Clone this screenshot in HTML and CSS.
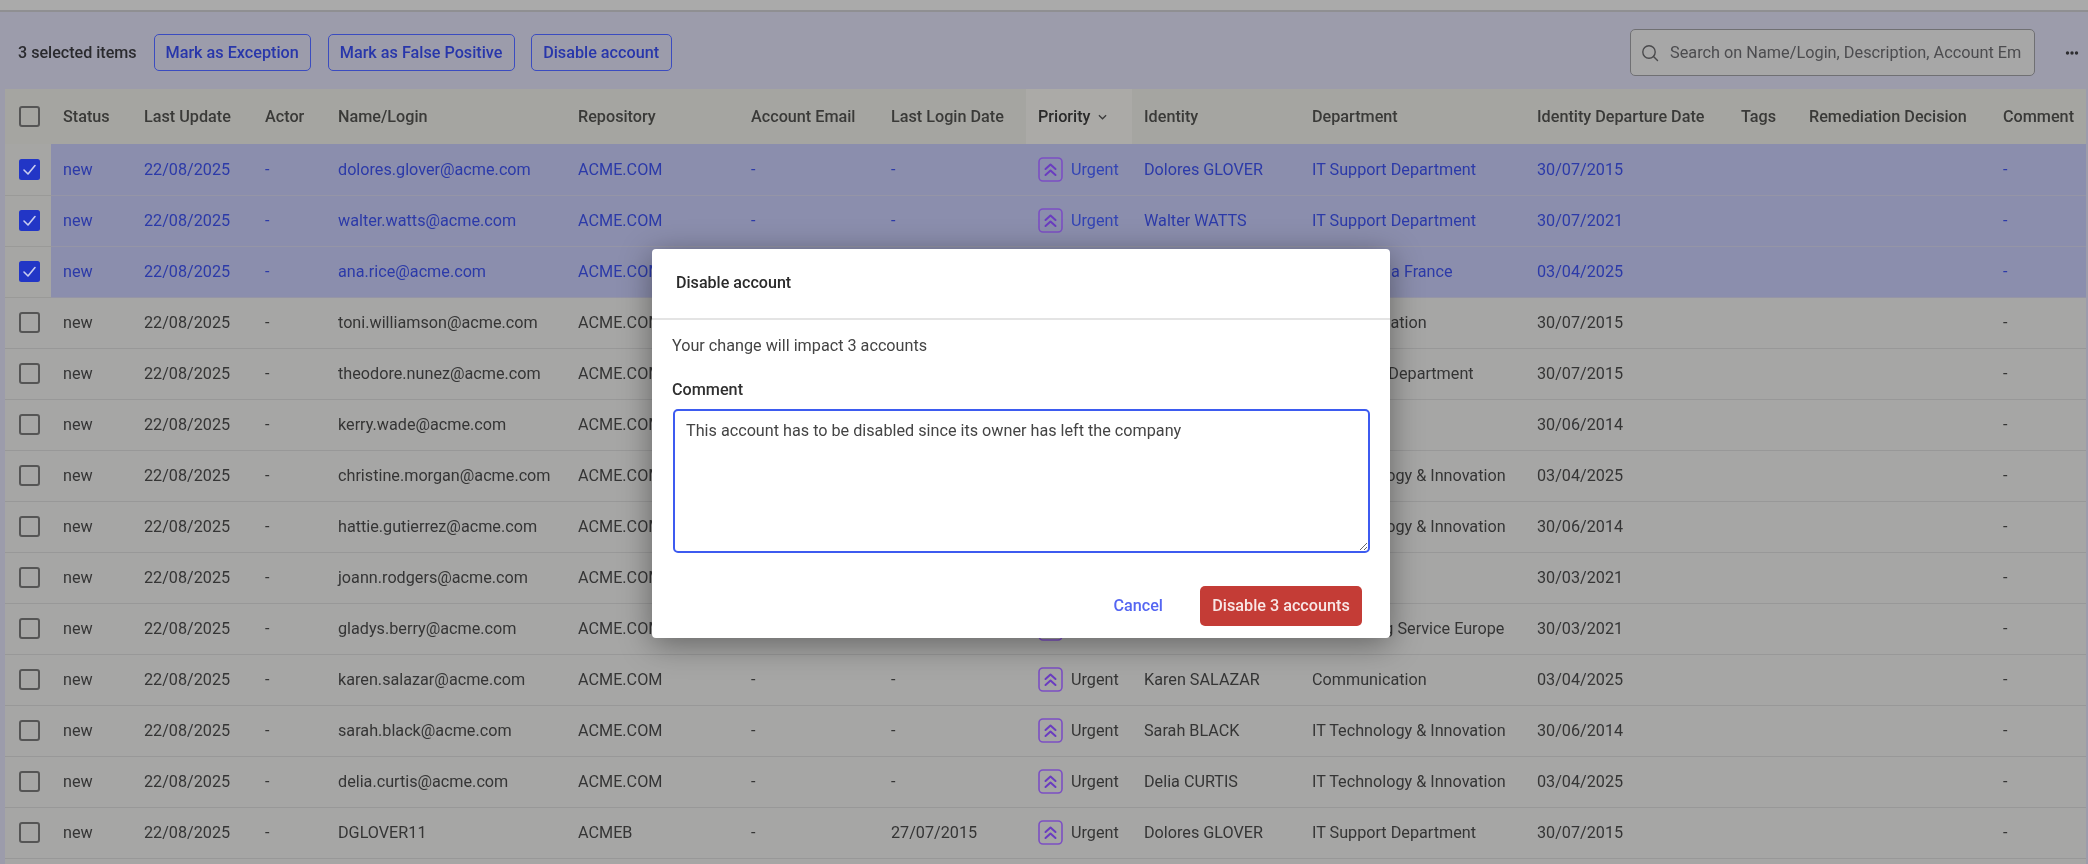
FILE: index.html
```html
<!DOCTYPE html>
<html lang="en">
<head>
<meta charset="utf-8">
<title>Disable account</title>
<link rel="stylesheet" href="styles.css">
</head>
<body>
<svg class="defs" aria-hidden="true"><defs>
<symbol id="urgent" viewBox="0 0 25 25"><rect x="1" y="1" width="23" height="23" rx="4" fill="none" stroke="#7c4fc4" stroke-width="1.6"/><path d="M7.5 12 12.5 7.5 17.5 12M7.5 18 12.5 13.5 17.5 18" fill="none" stroke="#6a3cc0" stroke-width="2" stroke-linecap="round" stroke-linejoin="round"/></symbol>
<symbol id="tick" viewBox="0 0 21 21"><rect width="21" height="21" rx="2.5" fill="#2236c6"/><path d="M5 11 9 15 16 6.5" fill="none" stroke="#c9cdf0" stroke-width="1.6" stroke-linecap="round" stroke-linejoin="round"/></symbol>
</defs></svg>
<div class="page">
  <div class="topbar"></div>
  <div class="toolbar">
    <span class="count">3 selected items</span>
    <button class="action a1">Mark as Exception</button>
    <button class="action a2">Mark as False Positive</button>
    <button class="action a3">Disable account</button>
    <div class="search">
      <svg class="search-icon" viewBox="0 0 20 20"><circle cx="9" cy="9" r="6.2" fill="none" stroke="#4a4a4c" stroke-width="1.4"/><path d="M13.5 13.5 17.5 17.5" stroke="#4a4a4c" stroke-width="1.4" stroke-linecap="round"/></svg>
      <span class="search-text">Search on Name/Login, Description, Account Em</span>
    </div>
    <svg class="more" viewBox="0 0 14 4"><circle cx="2.5" cy="2" r="1.7" fill="#2d2d30"/><circle cx="7" cy="2" r="1.7" fill="#2d2d30"/><circle cx="11.5" cy="2" r="1.7" fill="#2d2d30"/></svg>
  </div>
  <table class="grid">
    <colgroup><col class="c0"><col class="c1"><col class="c2"><col class="c3"><col class="c4"><col class="c5"><col class="c6"><col class="c7"><col class="c8"><col class="c9"><col class="c10"><col class="c11"><col class="c12"><col class="c13"><col class="c14"></colgroup>
    <thead><tr>
      <th class="check"><span class="box"></span></th><th>Status</th><th>Last Update</th><th>Actor</th><th>Name/Login</th><th>Repository</th><th>Account Email</th><th>Last Login Date</th>
      <th class="sorted">Priority <svg class="chev" viewBox="0 0 10 6"><path d="M1 1 5 5 9 1" fill="none" stroke="#3a3a3a" stroke-width="1.4"/></svg></th>
      <th>Identity</th><th>Department</th><th>Identity Departure Date</th><th>Tags</th><th>Remediation Decision</th><th>Comment</th>
    </tr></thead>
    <tbody>
      <tr class="sel"><td class="check"><svg class="tick"><use href="#tick"/></svg></td><td>new</td><td>22/08/2025</td><td>-</td><td>dolores.glover@acme.com</td><td>ACME.COM</td><td>-</td><td>-</td><td><span class="prio"><svg class="urgent"><use href="#urgent"/></svg>Urgent</span></td><td>Dolores GLOVER</td><td>IT Support Department</td><td>30/07/2015</td><td></td><td></td><td>-</td></tr>
      <tr class="sel"><td class="check"><svg class="tick"><use href="#tick"/></svg></td><td>new</td><td>22/08/2025</td><td>-</td><td>walter.watts@acme.com</td><td>ACME.COM</td><td>-</td><td>-</td><td><span class="prio"><svg class="urgent"><use href="#urgent"/></svg>Urgent</span></td><td>Walter WATTS</td><td>IT Support Department</td><td>30/07/2021</td><td></td><td></td><td>-</td></tr>
      <tr class="sel"><td class="check"><svg class="tick"><use href="#tick"/></svg></td><td>new</td><td>22/08/2025</td><td>-</td><td>ana.rice@acme.com</td><td>ACME.COM</td><td>-</td><td>-</td><td><span class="prio"><svg class="urgent"><use href="#urgent"/></svg>Urgent</span></td><td>Ana RICE</td><td>Sales Media France</td><td>03/04/2025</td><td></td><td></td><td>-</td></tr>
      <tr><td class="check"><span class="box"></span></td><td>new</td><td>22/08/2025</td><td>-</td><td>toni.williamson@acme.com</td><td>ACME.COM</td><td>-</td><td>-</td><td><span class="prio"><svg class="urgent"><use href="#urgent"/></svg>Urgent</span></td><td>Toni WILLIAMSON</td><td>Communication</td><td>30/07/2015</td><td></td><td></td><td>-</td></tr>
      <tr><td class="check"><span class="box"></span></td><td>new</td><td>22/08/2025</td><td>-</td><td>theodore.nunez@acme.com</td><td>ACME.COM</td><td>-</td><td>-</td><td><span class="prio"><svg class="urgent"><use href="#urgent"/></svg>Urgent</span></td><td>Theodore NUNEZ</td><td>Marketing Department</td><td>30/07/2015</td><td></td><td></td><td>-</td></tr>
      <tr><td class="check"><span class="box"></span></td><td>new</td><td>22/08/2025</td><td>-</td><td>kerry.wade@acme.com</td><td>ACME.COM</td><td>-</td><td>-</td><td><span class="prio"><svg class="urgent"><use href="#urgent"/></svg>Urgent</span></td><td>Kerry WADE</td><td>Legal</td><td>30/06/2014</td><td></td><td></td><td>-</td></tr>
      <tr><td class="check"><span class="box"></span></td><td>new</td><td>22/08/2025</td><td>-</td><td>christine.morgan@acme.com</td><td>ACME.COM</td><td>-</td><td>-</td><td><span class="prio"><svg class="urgent"><use href="#urgent"/></svg>Urgent</span></td><td>Christine MORGAN</td><td>IT Technology &amp; Innovation</td><td>03/04/2025</td><td></td><td></td><td>-</td></tr>
      <tr><td class="check"><span class="box"></span></td><td>new</td><td>22/08/2025</td><td>-</td><td>hattie.gutierrez@acme.com</td><td>ACME.COM</td><td>-</td><td>-</td><td><span class="prio"><svg class="urgent"><use href="#urgent"/></svg>Urgent</span></td><td>Hattie GUTIERREZ</td><td>IT Technology &amp; Innovation</td><td>30/06/2014</td><td></td><td></td><td>-</td></tr>
      <tr><td class="check"><span class="box"></span></td><td>new</td><td>22/08/2025</td><td>-</td><td>joann.rodgers@acme.com</td><td>ACME.COM</td><td>-</td><td>-</td><td><span class="prio"><svg class="urgent"><use href="#urgent"/></svg>Urgent</span></td><td>Joann RODGERS</td><td>Legal</td><td>30/03/2021</td><td></td><td></td><td>-</td></tr>
      <tr><td class="check"><span class="box"></span></td><td>new</td><td>22/08/2025</td><td>-</td><td>gladys.berry@acme.com</td><td>ACME.COM</td><td>-</td><td>-</td><td><span class="prio"><svg class="urgent"><use href="#urgent"/></svg>Urgent</span></td><td>Gladys BERRY</td><td>Advertising Service Europe</td><td>30/03/2021</td><td></td><td></td><td>-</td></tr>
      <tr><td class="check"><span class="box"></span></td><td>new</td><td>22/08/2025</td><td>-</td><td>karen.salazar@acme.com</td><td>ACME.COM</td><td>-</td><td>-</td><td><span class="prio"><svg class="urgent"><use href="#urgent"/></svg>Urgent</span></td><td>Karen SALAZAR</td><td>Communication</td><td>03/04/2025</td><td></td><td></td><td>-</td></tr>
      <tr><td class="check"><span class="box"></span></td><td>new</td><td>22/08/2025</td><td>-</td><td>sarah.black@acme.com</td><td>ACME.COM</td><td>-</td><td>-</td><td><span class="prio"><svg class="urgent"><use href="#urgent"/></svg>Urgent</span></td><td>Sarah BLACK</td><td>IT Technology &amp; Innovation</td><td>30/06/2014</td><td></td><td></td><td>-</td></tr>
      <tr><td class="check"><span class="box"></span></td><td>new</td><td>22/08/2025</td><td>-</td><td>delia.curtis@acme.com</td><td>ACME.COM</td><td>-</td><td>-</td><td><span class="prio"><svg class="urgent"><use href="#urgent"/></svg>Urgent</span></td><td>Delia CURTIS</td><td>IT Technology &amp; Innovation</td><td>03/04/2025</td><td></td><td></td><td>-</td></tr>
      <tr><td class="check"><span class="box"></span></td><td>new</td><td>22/08/2025</td><td>-</td><td>DGLOVER11</td><td>ACMEB</td><td>-</td><td>27/07/2015</td><td><span class="prio"><svg class="urgent"><use href="#urgent"/></svg>Urgent</span></td><td>Dolores GLOVER</td><td>IT Support Department</td><td>30/07/2015</td><td></td><td></td><td>-</td></tr>
      <tr class="tail"><td class="check"></td><td colspan="14"></td></tr>
    </tbody>
  </table>
</div>
<div class="overlay">
  <div class="modal">
    <div class="modal-head">Disable account</div>
    <div class="modal-body">
      <p class="impact">Your change will impact 3 accounts</p>
      <label class="label" for="comment">Comment</label>
      <textarea class="comment" id="comment">This account has to be disabled since its owner has left the company</textarea>
    </div>
    <div class="modal-foot">
      <button class="cancel">Cancel</button>
      <button class="danger">Disable 3 accounts</button>
    </div>
  </div>
</div>
</body>
</html>
```
FILE: styles.css
```css
html, body { margin: 0; height: 100%; overflow: hidden; }
body { background: #9c9cab; font-family: Roboto, "Liberation Sans", sans-serif; font-size: 16.2px; color: #333; }
.defs { position: absolute; width: 0; height: 0; }
.page { height: 864px; overflow: hidden; filter: blur(0.6px); }
.topbar { height: 12px; background: #aaaaaa; border-bottom: 2px solid #8f8f92; box-sizing: border-box; }
.toolbar { height: 77px; display: flex; align-items: center; padding: 4px 9px 0 18px; box-sizing: border-box; }
.count { font-weight: 500; font-size: 16.1px; color: #2a2a2e; margin-right: 17px; }
.action { height: 37px; box-sizing: border-box; border: 1.5px solid #3b4cc0; border-radius: 5px; background: transparent; color: #2836aa; font: 500 16.2px Roboto, sans-serif; padding: 0; }
.a1 { width: 157px; margin-right: 17px; }
.a2 { width: 187px; margin-right: 16px; }
.a3 { width: 141px; }
.search { margin-left: auto; width: 405px; height: 47px; box-sizing: border-box; border: 1.5px solid #707073; border-radius: 5px; background: #a7a7a7; display: flex; align-items: center; padding-left: 9px; overflow: hidden; white-space: nowrap; }
.search-icon { width: 20px; height: 20px; flex: none; margin-right: 10px; }
.search-text { font-size: 16.3px; color: #4c4c4f; }
.more { width: 14px; height: 4px; margin-left: 30px; }

.grid { table-layout: fixed; width: 2081px; margin-left: 5px; border-collapse: collapse; background: #a6a6a4; }
.c0 { width: 46px; } .c1 { width: 81px; } .c2 { width: 121px; } .c3 { width: 73px; } .c4 { width: 240px; }
.c5 { width: 173px; } .c6 { width: 140px; } .c7 { width: 147px; } .c8 { width: 106px; } .c9 { width: 168px; }
.c10 { width: 225px; } .c11 { width: 204px; } .c12 { width: 68px; } .c13 { width: 194px; } .c14 { width: 95px; }
th { height: 55px; padding: 0 0 0 12px; text-align: left; font-weight: 500; font-size: 16.2px; color: #3a3a38; background: #a5a5a1; white-space: nowrap; box-sizing: border-box; }
th.sorted { background: #abaaa7; color: #2a2a2a; }
.chev { width: 9px; height: 6px; margin-left: 3px; vertical-align: 2px; }
td { height: 51px; padding: 0 0 0 12px; white-space: nowrap; overflow: hidden; font-size: 16.2px; color: #353535; background: #a6a6a5; border-bottom: 1px solid #989898; box-sizing: border-box; }
th.check, td.check { padding: 0 0 0 14px; }
.sel td { background: #8b8ead; color: #2c3aa8; border-bottom-color: #9595a6; }
.sel td.check { background: #a6a6a4; border-bottom-color: #9a9a98; }
.box { display: block; width: 21px; height: 21px; box-sizing: border-box; border: 2px solid #555; border-radius: 3px; }
.tick { display: block; width: 21px; height: 21px; }
.prio { display: flex; align-items: center; gap: 8px; }
.urgent { width: 25px; height: 25px; flex: none; }
.sel .prio { color: #3344b4; }

.overlay { position: fixed; inset: 0; padding: 249px 0 0 652px; box-sizing: border-box; }
.modal { width: 738px; height: 389px; box-sizing: border-box; background: #fff; border-radius: 4px; box-shadow: 0 6px 32px rgba(0,0,0,.4); filter: blur(0.5px); display: flex; flex-direction: column; }
.modal-head { height: 71px; padding: 0 24px 2px; display: flex; align-items: center; box-sizing: border-box; border-bottom: 2px solid #e4e4e4; font-weight: 500; font-size: 16.1px; color: #2b2b2b; }
.modal-body { padding: 0 20px; }
.impact { margin: 16px 0 0; height: 20px; line-height: 20px; font-size: 16.2px; color: #444; }
.label { display: block; margin-top: 24px; height: 20px; line-height: 20px; font-weight: 500; font-size: 16.2px; color: #303030; }
.comment { display: block; width: 697px; height: 144px; margin: 9px 0 0 1px; padding: 10px 11px; box-sizing: border-box; border: 2.5px solid #3d5bf0; border-radius: 5px; outline: 0; font: 16.2px Roboto, sans-serif; color: #444; }
.modal-foot { margin-top: 33px; display: flex; justify-content: flex-end; padding-right: 28px; }
.cancel { border: 0; background: none; font: 500 16.2px Roboto, sans-serif; color: #5566f2; padding: 0 0 2px; margin-right: 37px; }
.danger { width: 162px; height: 40px; border: 0; border-radius: 5px; background: #c43c36; color: #f8e6e5; font: 500 16.2px Roboto, sans-serif; padding: 0 0 2px; }
```
